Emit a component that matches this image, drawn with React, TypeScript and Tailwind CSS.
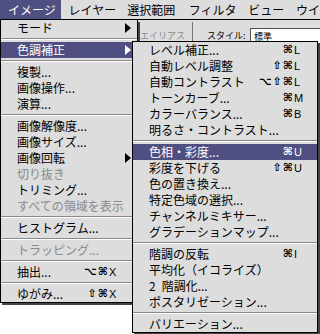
import React from "react";

type Item =
  | "sep"
  | { t: React.ReactNode; m?: string; k?: string; hl?: boolean; dis?: boolean; arrow?: boolean };

const left: Item[] = [
  { t: "モード", arrow: true },
  "sep",
  { t: "色調補正", arrow: true, hl: true },
  "sep",
  { t: "複製..." },
  { t: "画像操作..." },
  { t: "演算..." },
  "sep",
  { t: "画像解像度..." },
  { t: "画像サイズ..." },
  { t: "画像回転", arrow: true },
  { t: "切り抜き", dis: true },
  { t: "トリミング..." },
  { t: "すべての領域を表示", dis: true },
  "sep",
  { t: "ヒストグラム..." },
  "sep",
  { t: "トラッピング...", dis: true },
  "sep",
  { t: "抽出...", m: "⌥⌘", k: "X" },
  "sep",
  { t: "ゆがみ...", m: "⇧⌘", k: "X" },
];

const sub: Item[] = [
  { t: "レベル補正...", m: "⌘", k: "L" },
  { t: "自動レベル調整", m: "⇧⌘", k: "L" },
  { t: "自動コントラスト", m: "⌥⇧⌘", k: "L" },
  { t: "トーンカーブ...", m: "⌘", k: "M" },
  { t: "カラーバランス...", m: "⌘", k: "B" },
  { t: "明るさ・コントラスト..." },
  "sep",
  { t: "色相・彩度...", m: "⌘", k: "U", hl: true },
  { t: "彩度を下げる", m: "⇧⌘", k: "U" },
  { t: "色の置き換え..." },
  { t: "特定色域の選択..." },
  { t: "チャンネルミキサー..." },
  { t: "グラデーションマップ..." },
  "sep",
  { t: "階調の反転", m: "⌘", k: "I" },
  { t: "平均化（イコライズ）" },
  {
    t: (
      <>
        2<span className="ml-[6px]">階調化...</span>
      </>
    ),
  },
  { t: "ポスタリゼーション..." },
  "sep",
  { t: "バリエーション..." },
];

function Arrow({ white }: { white?: boolean }) {
  return (
    <svg width="6" height="10" viewBox="0 0 6 10" className="shrink-0">
      <path d="M0 0 L6 5 L0 10 Z" fill={white ? "#fff" : "#000"} />
    </svg>
  );
}

function Sep() {
  return (
    <div className="h-[6px] flex flex-col justify-center">
      <div className="h-px bg-[#8a8a8a]" />
      <div className="h-px bg-white" />
    </div>
  );
}

function Menu({ items, pr }: { items: Item[]; pr: string }) {
  return (
    <>
      {items.map((it, i) => {
        if (it === "sep") return <Sep key={i} />;
        const color = it.hl ? "bg-[#4f4f82] text-white" : it.dis ? "text-[#8a8a8a]" : "text-black";
        return (
          <div
            key={i}
            className={`h-[16px] flex items-center pl-[16px] ${it.arrow ? "pr-[6px]" : pr} ${color}`}
          >
            <span className="flex-1 whitespace-nowrap leading-[16px]">{it.t}</span>
            {it.m && (
              <span className="flex items-center leading-[16px]">
                <span className="font-['DejaVu_Sans',sans-serif] text-[11px] font-bold tracking-[1px]">
                  {it.m}
                </span>
                <span className="w-[8px] font-['Liberation_Sans',sans-serif] text-[11px]">{it.k}</span>
              </span>
            )}
            {it.arrow && <Arrow white={it.hl} />}
          </div>
        );
      })}
    </>
  );
}

export default function App() {
  return (
    <div className="relative w-[320px] h-[334px] overflow-hidden bg-white font-['Noto_Sans_CJK_JP',sans-serif] text-[12px] text-black">
      {/* menu bar */}
      <div className="h-[20px] bg-[#dddddd] border-b border-black flex items-center whitespace-nowrap leading-[19px]">
        <div className="w-[61px] h-full pl-[8px] bg-[#4f4f82] text-white">イメージ</div>
        <div className="w-[59px] h-full pl-[8px]">レイヤー</div>
        <div className="w-[62px] h-full pl-[8px]">選択範囲</div>
        <div className="w-[60px] h-full pl-[8px]">フィルタ</div>
        <div className="w-[48px] h-full pl-[8px]">ビュー</div>
        <div className="h-full pl-[8px]">ウイ</div>
      </div>
      {/* options bar */}
      <div className="h-[22px] bg-[#dddddd] flex items-stretch whitespace-nowrap text-[9px] leading-[11px]">
        <div className="w-[140px]" />
        <div className="w-[52px] pt-[10px] text-[#8a8a8a]">エイリアス</div>
        <div className="w-px mt-[2px] bg-[#777]" />
        <div className="w-[14px]" />
        <div className="w-[43px] pt-[10px]">スタイル:</div>
        <div className="flex-1 mt-[8px] border-t border-l border-[#555] bg-white pl-[3px] pt-[2px]">標準</div>
      </div>

      {/* Image menu */}
      <div className="absolute left-0 top-[20px] w-[138px] bg-[#dddddd] border-l border-r border-b border-black shadow-[2px_2px_0_#444]">
        <Menu items={left} pr="pr-[20px]" />
      </div>

      {/* Adjust submenu */}
      <div className="absolute left-[132px] top-[41px] w-[186px] bg-[#dddddd] border border-black shadow-[2px_2px_0_#444]">
        <Menu items={sub} pr="pr-[15px]" />
      </div>
    </div>
  );
}
